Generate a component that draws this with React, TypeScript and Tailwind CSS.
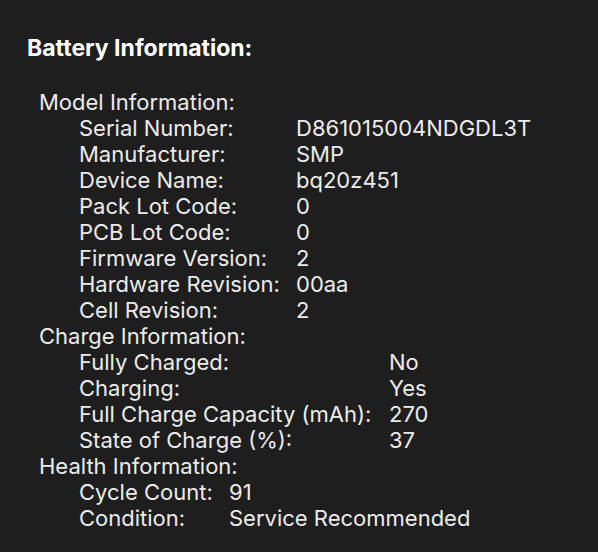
const sections = [
  {
    title: "Model Information:",
    labelWidth: "w-[217px]",
    rows: [
      ["Serial Number:", "D861015004NDGDL3T"],
      ["Manufacturer:", "SMP"],
      ["Device Name:", "bq20z451"],
      ["Pack Lot Code:", "0"],
      ["PCB Lot Code:", "0"],
      ["Firmware Version:", "2"],
      ["Hardware Revision:", "00aa"],
      ["Cell Revision:", "2"],
    ],
  },
  {
    title: "Charge Information:",
    labelWidth: "w-[310px]",
    rows: [
      ["Fully Charged:", "No"],
      ["Charging:", "Yes"],
      ["Full Charge Capacity (mAh):", "270"],
      ["State of Charge (%):", "37"],
    ],
  },
  {
    title: "Health Information:",
    labelWidth: "w-[150px]",
    rows: [
      ["Cycle Count:", "91"],
      ["Condition:", "Service Recommended"],
    ],
  },
];

export default function App() {
  return (
    <div className="w-[598px] h-[552px] bg-[#1e1e1e] text-[#ececec] font-['Inter',sans-serif] text-[22px] leading-[26px] pt-[35px] pl-[27px]">
      <div className="font-bold text-[23px] text-white">Battery Information:</div>
      <div className="mt-[28px] pl-[12px]">
        {sections.map((s) => (
          <div key={s.title}>
            <div>{s.title}</div>
            {s.rows.map(([label, value]) => (
              <div key={label} className="flex pl-[40px]">
                <div className={`${s.labelWidth} shrink-0 whitespace-nowrap`}>{label}</div>
                <div className="whitespace-nowrap">{value}</div>
              </div>
            ))}
          </div>
        ))}
      </div>
    </div>
  );
}
